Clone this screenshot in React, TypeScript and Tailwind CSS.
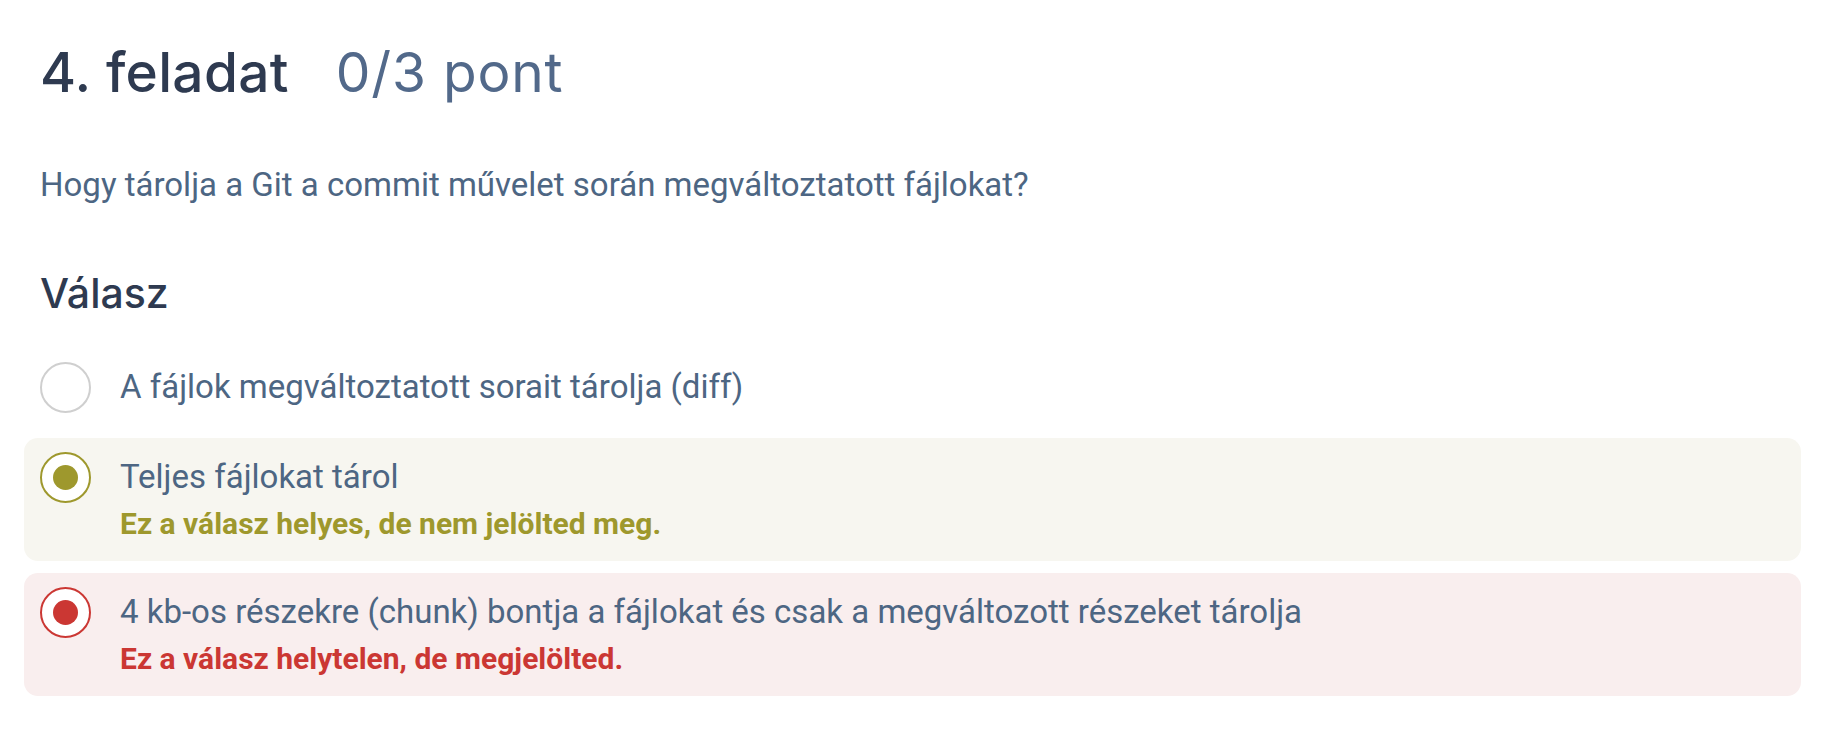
import React from "react";

type Opt = {
  text: string;
  state: "none" | "correct" | "wrong";
  msg?: string;
};

const options: Opt[] = [
  { text: "A fájlok megváltoztatott sorait tárolja (diff)", state: "none" },
  { text: "Teljes fájlokat tárol", state: "correct", msg: "Ez a válasz helyes, de nem jelölted meg." },
  {
    text: "4 kb-os részekre (chunk) bontja a fájlokat és csak a megváltozott részeket tárolja",
    state: "wrong",
    msg: "Ez a válasz helytelen, de megjelölted.",
  },
];

function Radio({ state }: { state: Opt["state"] }) {
  if (state === "none") {
    return <div className="w-[51px] h-[51px] rounded-full border-2 border-[#cfcfcf] bg-white" />;
  }
  const ring = state === "correct" ? "border-[#9e982d]" : "border-[#cb3733]";
  const dot = state === "correct" ? "bg-[#9e982d]" : "bg-[#cb3733]";
  return (
    <div className={`w-[51px] h-[51px] rounded-full border-2 ${ring} bg-white flex items-center justify-center`}>
      <div className={`w-[25px] h-[25px] rounded-full ${dot}`} />
    </div>
  );
}

export default function App() {
  const body = { fontFamily: "Roboto, 'Liberation Sans', sans-serif" };
  const head = { fontFamily: "Inter, 'Noto Sans', sans-serif" };
  return (
    <div className="min-h-[734px] bg-white pl-10 pt-[42px]">
      <div className="w-[1745px]">
        <h1 className="flex items-center h-[60px] leading-[60px] text-[55px]" style={head}>
          <span className="font-medium text-[#2e3a50] tracking-[0.3px]">4. feladat</span>
          <span className="ml-[47px] font-normal text-[#52698a] tracking-[0.8px]">0/3 pont</span>
        </h1>
        <p className="mt-[59px] text-[33px] leading-[48px] text-[#4d6683]" style={body}>
          Hogy tárolja a Git a commit művelet során megváltoztatott fájlokat?
        </p>
        <h2 className="mt-[60px] text-[41px] leading-[48px] font-medium text-[#2e3a50]" style={head}>
          Válasz
        </h2>
        <div className="mt-[31px] -mx-4 flex flex-col gap-3" style={body}>
          {options.map((o, i) => {
            const bg =
              o.state === "correct" ? "bg-[#f7f6f0]" : o.state === "wrong" ? "bg-[#f9eeee]" : "bg-transparent";
            const msgColor = o.state === "correct" ? "text-[#9e982d]" : "text-[#cb3733]";
            return (
              <div key={i} className={`flex items-start px-4 py-[15px] rounded-[14px] ${bg}`}>
                <div className="h-[48px] flex items-center shrink-0">
                  <Radio state={o.state} />
                </div>
                <div className="ml-[29px] flex flex-col">
                  <div className="text-[33px] leading-[48px] text-[#4d6683]">{o.text}</div>
                  {o.msg && (
                    <div className={`text-[30px] leading-[45px] font-bold ${msgColor}`}>{o.msg}</div>
                  )}
                </div>
              </div>
            );
          })}
        </div>
      </div>
    </div>
  );
}
